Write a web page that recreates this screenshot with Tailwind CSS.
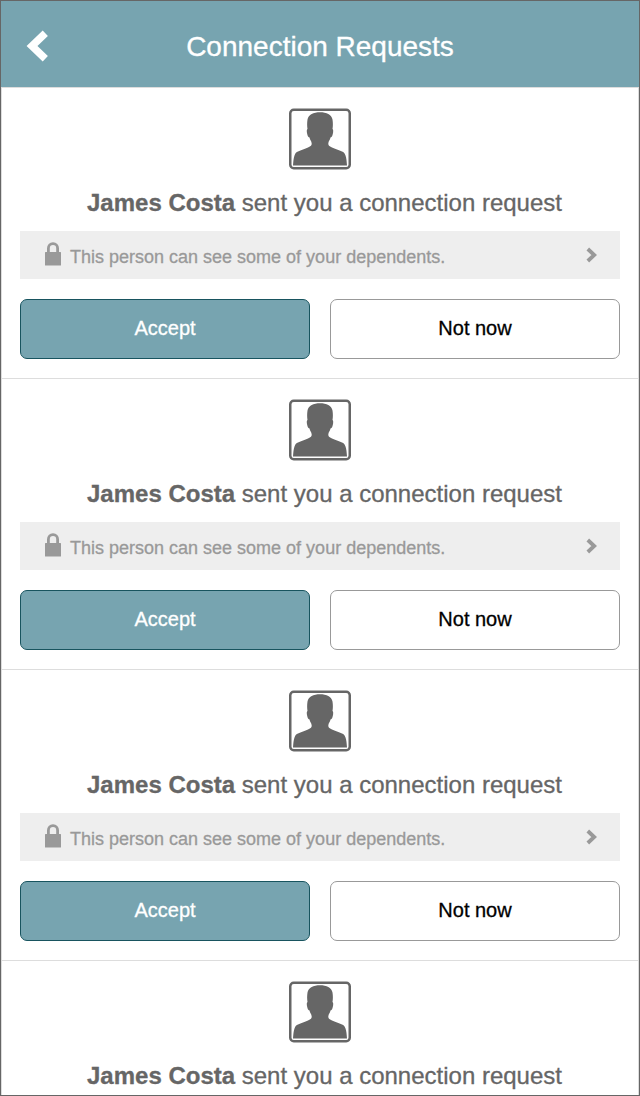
<!DOCTYPE html>
<html lang="en">
<head>
<meta charset="utf-8">
<title>Connection Requests</title>
<script src="https://cdn.jsdelivr.net/npm/@tailwindcss/browser@4"></script>
</head>
<body class="bg-white">
<svg class="hidden">
  <symbol id="avatar" viewBox="0 0 62 62">
    <rect x="1.25" y="1.75" width="59.5" height="58.500" rx="3.5" fill="#fff" stroke="#666" stroke-width="2.5"/>
    <path fill="#666" d="M4 57.500C4.300 53 4.600 50 5.500 47.500C6.200 45 7.500 44.300 9 43.500C12 42 16 40.800 19 39.500C22 38.200 22.700 37.500 22.700 35.500C22.500 33 21 32 20.500 29.500C19 29.500 18.300 27 17.900 24.500C17.700 22.500 17.700 21.500 18.500 21C18 18 18 15 18.500 11.500C19.500 6.500 24.500 4.300 31 4.300C37.500 4.300 42.500 6.500 43.500 11.500C44 15 44 18 43.500 21C44.300 21.500 44.300 22.500 44.100 24.500C43.700 27 43 29.500 41.500 29.500C41 32 39.500 33 39.300 35.500C39.300 37.500 40 38.200 43 39.500C46 40.800 50 42 53 43.500C54.500 44.300 55.800 45 56.500 47.500C57.400 50 57.700 53 58 57.500Z"/>
  </symbol>
  <symbol id="lock" viewBox="0 0 16 24">
    <path fill="none" stroke="#999" stroke-width="2.800" d="M3.400 11V6.300C3.400 3.500 5.300 1.600 8 1.600C10.700 1.600 12.600 3.500 12.600 6.300V11"/>
    <rect x="0" y="10" width="16" height="13.500" rx="0.500" fill="#999"/>
  </symbol>
  <symbol id="next" viewBox="0 0 12 16">
    <path fill="none" stroke="#999" stroke-width="3.800" d="M1.800 2L8.200 8L1.800 14"/>
  </symbol>
</svg>
<div class="w-[640px] h-[1096px] border border-[#666] overflow-hidden flex flex-col font-['Liberation_Sans',Arial,sans-serif] [-webkit-text-stroke:0.3px_currentColor]">
  <header class="h-[86px] shrink-0 bg-[#77a4b0] grid grid-cols-[100px_1fr_100px] items-center text-white">
    <svg class="ml-[25px] mt-[3px] w-6 h-8" viewBox="0 0 24 32"><path fill="none" stroke="#fff" stroke-width="7.500" d="M19.300 3.300L6 16L19.300 28.700"/></svg>
    <h1 class="text-[28px] leading-8 text-center mt-[5px]">Connection Requests</h1>
  </header>
  <main id="list" class="border-t border-x border-[#ddd] flex-1 min-h-0 overflow-hidden"></main>
</div>
<template id="request">
  <section class="h-[291px] border-b border-[#ddd] px-[18px] pt-5 flex flex-col">
    <svg class="w-[62px] h-[62px] self-center shrink-0"><use href="#avatar"/></svg>
    <p class="mt-[19px] h-7 leading-7 pl-[9px] text-2xl text-center text-[#666] whitespace-nowrap shrink-0"><b>James Costa</b> sent you a connection request</p>
    <a class="actions mt-[14px] h-12 shrink-0 bg-[#eee] flex items-center pl-[25px] pr-[22px] text-lg text-[#999]">
      <svg class="w-4 h-6 shrink-0 -mt-[3px]"><use href="#lock"/></svg>
      <span class="ml-[9px] mt-1 flex-1">This person can see some of your dependents.</span>
      <svg class="w-3 h-4 shrink-0"><use href="#next"/></svg>
    </a>
    <div class="actions mt-5 h-[60px] shrink-0 grid grid-cols-2 gap-5 text-xl">
      <button class="rounded-[7px] border border-[#18545f] bg-[#77a4b0] text-white pb-0.5">Accept</button>
      <button class="rounded-[7px] border border-[#999] bg-white text-black pb-0.5">Not now</button>
    </div>
  </section>
</template>
<script>
  const list = document.getElementById('list');
  const request = document.getElementById('request');
  for (let i = 0; i < 4; i++) {
    const item = request.content.cloneNode(true);
    // the last request is below the fold from its details row on
    if (i === 3) item.querySelectorAll('.actions').forEach(el => el.remove());
    list.append(item);
  }
</script>
</body>
</html>
